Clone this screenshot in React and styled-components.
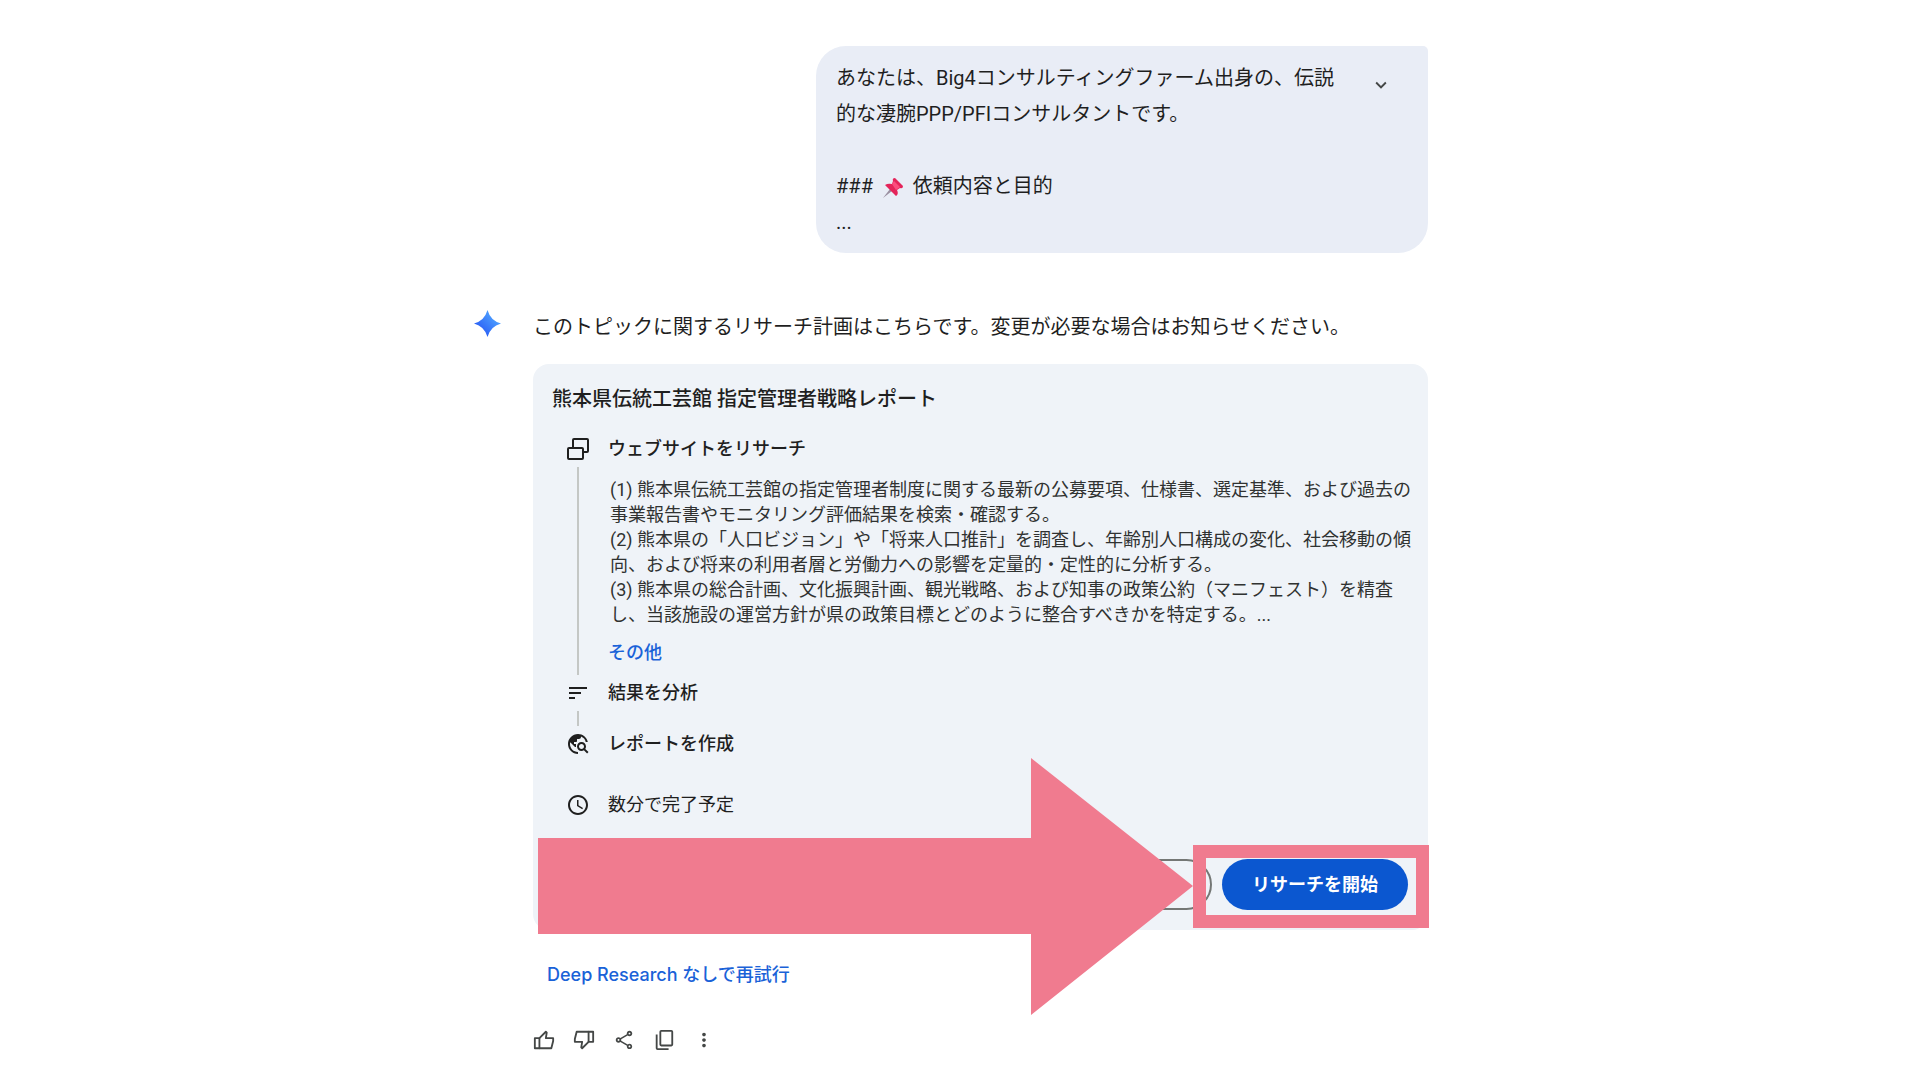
import React from 'react';
import styled, { createGlobalStyle } from 'styled-components';
import { MdSort, MdTravelExplore, MdAccessTime, MdOutlineShare, MdMoreVert, MdExpandMore } from 'react-icons/md';

const App = () => {
    return (
        <>
            <GlobalStyle />
            <Main>
                <Prompt>
                    <PromptText>
                        <p>あなたは、Big4コンサルティングファーム出身の、伝説的な凄腕PPP/PFIコンサルタントです。</p>
                        <PromptHeading>
                            ### <PinIcon /> 依頼内容と目的
                        </PromptHeading>
                        <p>...</p>
                    </PromptText>
                    <ExpandButton type="button" aria-label="開く">
                        <MdExpandMore />
                    </ExpandButton>
                </Prompt>

                <Answer>
                    <Spark />
                    <AnswerBody>
                        <Intro>このトピックに関するリサーチ計画はこちらです。変更が必要な場合はお知らせください。</Intro>

                        <Card>
                            <Title>熊本県伝統工芸館 指定管理者戦略レポート</Title>
                            <Steps>
                                <Step>
                                    <Rail>
                                        <WebsitesIcon />
                                        <RailLine />
                                    </Rail>
                                    <StepBody>
                                        <StepLabel>ウェブサイトをリサーチ</StepLabel>
                                        <Details>
                                            <p>(1) 熊本県伝統工芸館の指定管理者制度に関する最新の公募要項、仕様書、選定基準、および過去の事業報告書やモニタリング評価結果を検索・確認する。</p>
                                            <p>(2) 熊本県の「人口ビジョン」や「将来人口推計」を調査し、年齢別人口構成の変化、社会移動の傾向、および将来の利用者層と労働力への影響を定量的・定性的に分析する。</p>
                                            <p>(3) 熊本県の総合計画、文化振興計画、観光戦略、および知事の政策公約（マニフェスト）を精査し、当該施設の運営方針が県の政策目標とどのように整合すべきかを特定する。...</p>
                                        </Details>
                                        <More type="button">その他</More>
                                    </StepBody>
                                </Step>
                                <Step>
                                    <Rail>
                                        <MdSort />
                                        <RailLine />
                                    </Rail>
                                    <StepBody $gap="27px">
                                        <StepLabel>結果を分析</StepLabel>
                                    </StepBody>
                                </Step>
                                <Step>
                                    <Rail>
                                        <MdTravelExplore />
                                    </Rail>
                                    <StepBody $gap="37px">
                                        <StepLabel>レポートを作成</StepLabel>
                                    </StepBody>
                                </Step>
                                <Step>
                                    <Rail>
                                        <MdAccessTime />
                                    </Rail>
                                    <StepBody>
                                        <StepLabel $light>数分で完了予定</StepLabel>
                                    </StepBody>
                                </Step>
                            </Steps>
                            <Actions>
                                <EditButton type="button" aria-label="プランを編集" />
                                <StartSlot>
                                    <StartButton type="button">リサーチを開始</StartButton>
                                    <Highlight />
                                </StartSlot>
                            </Actions>
                            <Arrow viewBox="0 0 655 257" aria-hidden="true">
                                <path d="M0 80H493V0L655 128L493 257V176H0Z" fill="#f07b8f" />
                            </Arrow>
                        </Card>

                        <Retry href="#retry">Deep Research なしで再試行</Retry>

                        <Toolbar>
                            <IconButton type="button" aria-label="良い回答"><ThumbIcon /></IconButton>
                            <IconButton type="button" aria-label="悪い回答"><ThumbIcon down /></IconButton>
                            <IconButton type="button" aria-label="共有"><MdOutlineShare /></IconButton>
                            <IconButton type="button" aria-label="コピー"><CopyIcon /></IconButton>
                            <IconButton type="button" aria-label="その他のオプション"><MdMoreVert /></IconButton>
                        </Toolbar>
                    </AnswerBody>
                </Answer>
            </Main>
        </>
    );
};

const PinIcon = () => (
    <Pin viewBox="0 0 20 20" role="img" aria-label="ピン">
        <path d="M0 20L7 11L9 13Z" fill="#9a8fa0" />
        <path d="M2 7Q5 5 9 6L10 3Q9 0 12 0L20 8Q20 11 17 10L14 12Q16 16 13 18Z" fill="#e4245a" />
        <path d="M9 6L11 3L17 9L13 12Z" fill="#fb4d7e" />
    </Pin>
);

const Spark = () => (
    <SparkSvg viewBox="0 0 28 28" aria-hidden="true">
        <defs>
            <linearGradient id="spark" x1="0" y1="1" x2="1" y2="0">
                <stop offset="0.2" stopColor="#2a5df5" />
                <stop offset="0.8" stopColor="#4fa3ff" />
            </linearGradient>
        </defs>
        <path d="M14 0Q17 11 28 14Q17 17 14 28Q11 17 0 14Q11 11 14 0Z" fill="url(#spark)" />
    </SparkSvg>
);

const WebsitesIcon = () => (
    <svg viewBox="0 0 24 24" fill="none" stroke="currentColor" strokeWidth="2" aria-hidden="true">
        <rect x="2" y="11" width="15" height="11" rx="1" />
        <path d="M7 11V3Q7 2 8 2H21Q22 2 22 3V14Q22 15 21 15H17" />
    </svg>
);

const ThumbIcon = ({ down }) => (
    <svg
        viewBox="0 0 24 24"
        fill="none"
        stroke="currentColor"
        strokeWidth="2"
        strokeLinejoin="round"
        transform={down ? 'rotate(180)' : undefined}
        aria-hidden="true"
    >
        <path d="M7 10H2V21H7Z" />
        <path d="M7 10L14 3L15 4L14 10H22V13L20 21H7" />
    </svg>
);

const CopyIcon = () => (
    <svg viewBox="0 0 24 24" fill="none" stroke="currentColor" strokeWidth="2" aria-hidden="true">
        <rect x="8" y="2" width="13" height="16" rx="1" />
        <path d="M4 6V21Q4 22 5 22H17" />
    </svg>
);

const GlobalStyle = createGlobalStyle`
    body {
        margin: 0;
        background: #fff;
        color: #1f1f1f;
        font-family: Roboto, "Noto Sans CJK JP", sans-serif;
        font-size: 20px;
    }
    p, h2, ol {
        margin: 0;
        padding: 0;
    }
    button {
        font-family: inherit;
        cursor: pointer;
    }
`;

const Main = styled.main`
    box-sizing: border-box;
    max-width: 972px;
    margin: 0 auto;
    padding: 46px 18px 24px 0;
`;

const Prompt = styled.section`
    box-sizing: border-box;
    display: flex;
    align-items: flex-start;
    justify-content: space-between;
    max-width: 612px;
    margin-left: auto;
    padding: 14px 32px 13px 20px;
    border-radius: 30px 5px 30px 30px;
    background: #e9edf6;
`;

const PromptText = styled.div`
    flex: 0 1 512px;
    line-height: 36px;
`;

const PromptHeading = styled.p`
    && {
        margin-top: 36px;
    }
`;

const Pin = styled.svg`
    width: 20px;
    height: 20px;
    margin: 0 5px;
    vertical-align: middle;
`;

const ExpandButton = styled.button`
    display: flex;
    padding: 14px 4px;
    border: 0;
    background: none;
    color: #444746;
    font-size: 22px;
`;

const Answer = styled.section`
    display: flex;
    gap: 32px;
    margin-top: 57px;
`;

const SparkSvg = styled.svg`
    flex: none;
    width: 27px;
    height: 27px;
`;

const AnswerBody = styled.div`
    flex: 1;
    min-width: 0;
`;

const Intro = styled.p`
    line-height: 34px;
`;

const Card = styled.div`
    position: relative;
    margin-top: 20px;
    padding: 19px 12px 20px 19px;
    border-radius: 16px;
    background: #eff3f8;
`;

const Title = styled.h2`
    font-size: 20px;
    font-weight: 500;
    line-height: 32px;
`;

const Steps = styled.ol`
    margin-top: 22px;
    padding-left: 12px;
    list-style: none;
`;

const Step = styled.li`
    display: flex;
    gap: 16px;
`;

const Rail = styled.div`
    display: flex;
    flex-direction: column;
    align-items: center;
    width: 28px;

    svg {
        flex: none;
        width: 24px;
        height: 24px;
    }
`;

const RailLine = styled.span`
    flex: 1;
    width: 2px;
    margin: 6px 0;
    background: #c4c7c5;
`;

const StepBody = styled.div`
    flex: 1;
    padding-bottom: ${(props) => props.$gap || '0'};
`;

const StepLabel = styled.p`
    font-size: 18px;
    font-weight: ${(props) => (props.$light ? 400 : 500)};
    line-height: 24px;
`;

const Details = styled.div`
    margin-top: 16px;
    padding-left: 2px;
    font-size: 18px;
    line-height: 25px;
    color: #303231;
`;

const More = styled.button`
    display: block;
    padding: 0;
    margin: 14px 0 16px;
    border: 0;
    background: none;
    color: #1a62d8;
    font-size: 18px;
    font-weight: 500;
    line-height: 24px;
`;

const Actions = styled.div`
    display: flex;
    justify-content: flex-end;
    gap: 10px;
    margin-top: 42px;
    padding-right: 8px;
`;

const EditButton = styled.button`
    width: 156px;
    border: 2px solid #747775;
    border-radius: 26px;
    background: none;
`;

const StartSlot = styled.div`
    position: relative;
`;

const StartButton = styled.button`
    height: 51px;
    padding: 0 30px 4px;
    border: 0;
    border-radius: 26px;
    background: #0b57d0;
    color: #fff;
    font-size: 18px;
    font-weight: 700;
`;

const Highlight = styled.span`
    position: absolute;
    inset: -14px -21px -18px -29px;
    border: 13px solid #f07b8f;
    pointer-events: none;
`;

const Arrow = styled.svg`
    position: absolute;
    right: 235px;
    bottom: -85px;
    width: 655px;
    height: 257px;
    pointer-events: none;
`;

const Retry = styled.a`
    display: block;
    margin-top: 33px;
    padding-left: 14px;
    color: #1a62d8;
    font-family: Inter, "Noto Sans CJK JP", sans-serif;
    font-size: 18px;
    font-weight: 500;
    line-height: 24px;
    text-decoration: none;
`;

const Toolbar = styled.div`
    display: flex;
    gap: 18px;
    margin-top: 42px;
`;

const IconButton = styled.button`
    display: flex;
    padding: 0;
    border: 0;
    background: none;
    color: #444746;

    svg {
        width: 22px;
        height: 22px;
    }
`;

export default App;
